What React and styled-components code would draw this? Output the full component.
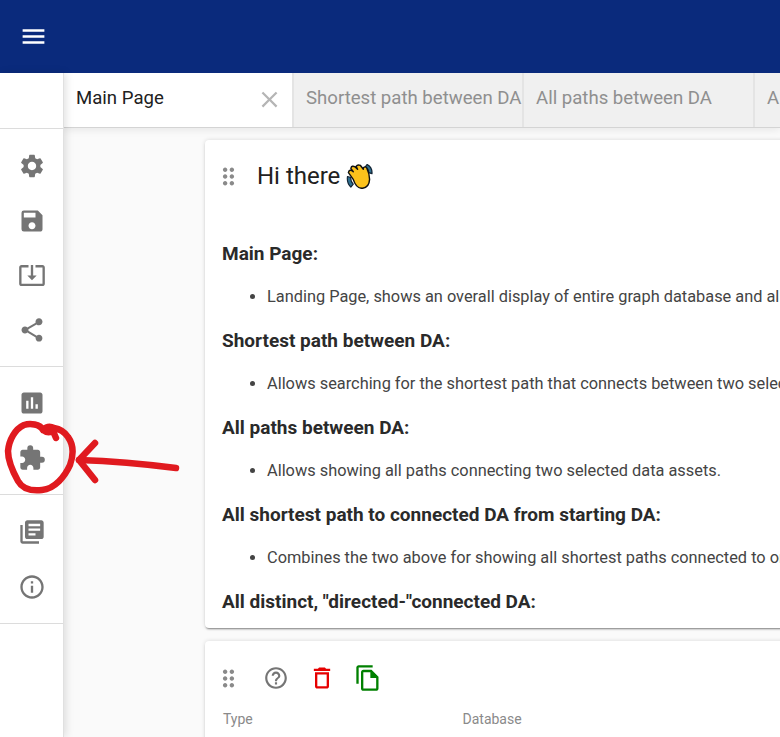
import React from "react";
import styled, { createGlobalStyle } from "styled-components";
import {
  MdMenu,
  MdClose,
  MdSettings,
  MdSave,
  MdSystemUpdateAlt,
  MdShare,
  MdAssessment,
  MdExtension,
  MdLibraryBooks,
  MdInfoOutline,
  MdHelpOutline,
  MdDeleteOutline,
  MdOutlineFileCopy,
  MdDragIndicator,
} from "react-icons/md";

const GlobalStyle = createGlobalStyle`
  html, body {
    margin: 0;
    height: 100%;
    overflow: hidden;
    background: #fafafa;
    font-family: Roboto, "Liberation Sans", sans-serif;
  }
  * { box-sizing: border-box; }
`;

const sections = [
  ["Main Page:", "Landing Page, shows an overall display of entire graph database and all of its data assets."],
  ["Shortest path between DA:", "Allows searching for the shortest path that connects between two selected data assets."],
  ["All paths between DA:", "Allows showing all paths connecting two selected data assets."],
  ["All shortest path to connected DA from starting DA:", "Combines the two above for showing all shortest paths connected to one data asset."],
];

const sidebarGroups = [
  { top: 10, icons: [MdSettings, MdSave, MdSystemUpdateAlt, MdShare] },
  { top: 9, icons: [MdAssessment, MdExtension] },
  { top: 10, icons: [MdLibraryBooks, MdInfoOutline] },
];

export default function App() {
  return (
    <Page>
      <GlobalStyle />
      <AppBar>
        <MdMenu size={29} />
      </AppBar>
      <Body>
        <Sidebar>
          <SidebarTop />
          {sidebarGroups.map((group, i) => (
            <SidebarGroup key={i} $top={group.top}>
              {group.icons.map((Icon, j) => (
                <SideIcon key={j}>
                  <Icon size={28} />
                </SideIcon>
              ))}
            </SidebarGroup>
          ))}
        </Sidebar>
        <Main>
          <TabBar>
            <Tab $active $width={230}>
              Main Page
              <CloseIcon size={27} />
            </Tab>
            <Tab $width={230}>Shortest path between DA</Tab>
            <Tab $width={231}>All paths between DA</Tab>
            <Tab $width={230}>All shortest path to connected DA</Tab>
          </TabBar>
          <Cards>
            <Card $height={488}>
              <CardHeader>
                <Grip size={27} />
                <Title>
                  Hi there <WaveHand />
                </Title>
              </CardHeader>
              <Content>
                {sections.map(([title, text]) => (
                  <React.Fragment key={title}>
                    <Heading>{title}</Heading>
                    <Bullets>
                      <li>{text}</li>
                    </Bullets>
                  </React.Fragment>
                ))}
                <Heading>All distinct, "directed-"connected DA:</Heading>
              </Content>
            </Card>
            <Card $height={300}>
              <Toolbar>
                <Grip size={27} />
                <ToolIcons>
                  <MdHelpOutline size={26} color="#757575" />
                  <MdDeleteOutline size={28} color="#e60000" />
                  <MdOutlineFileCopy size={28} color="#008000" />
                </ToolIcons>
              </Toolbar>
              <Fields>
                <FieldLabel>Type</FieldLabel>
                <FieldLabel>Database</FieldLabel>
              </Fields>
            </Card>
          </Cards>
        </Main>
      </Body>
      <Annotation viewBox="0 420 200 120" aria-hidden="true">
        <path d="M43 430 C40 424 30 423 24 425 C15 429 9 440 8 451 C8 462 13 472 18 481 C23 490 33 491 42 490 C55 489 65 476 70 465 C74 454 73 444 68 437 C64 431 60 429 54 428 C50 426 47 426 43 430 Q48 434 53 431 L56 438" />
        <path d="M79 460 C110 461 145 464 176 468" />
        <path d="M95 443 L79 460 L95 480" />
      </Annotation>
    </Page>
  );
}

function WaveHand() {
  return (
    <Wave viewBox="0 0 28 26" aria-hidden="true">
      <path d="M1.5 13 Q0.5 20 5 24 L7.5 21 Q4.5 18 5 14 Z M22 0.5 Q27.5 3.5 27 10 L23.5 9 Q23.5 5 20 3 Z" fill="#2f6f8f" stroke="#123" strokeWidth="1.2" strokeLinejoin="round" />
      <path d="M7.5 16 L2.5 9 Q3 5.5 6.5 7 L7.5 8 L5 4.5 Q6 1 9.5 3 L12 5.5 L10.5 2.5 Q12 0 15 1.5 L18 5.5 L18 4 Q20 2 21.5 4 Q24.5 10 24.5 16 Q24 24.5 17 25.3 Q10.5 25.5 7.5 16 Z" fill="#fcc21b" stroke="#111" strokeWidth="1.5" strokeLinejoin="round" />
    </Wave>
  );
}

const Page = styled.div`
  position: relative;
  width: 780px;
  height: 737px;
  overflow: hidden;
  background: #fafafa;
`;

const AppBar = styled.header`
  height: 73px;
  background: #0a2a7c;
  color: #fff;
  display: flex;
  align-items: center;
  padding-left: 19px;
`;

const Body = styled.div`
  display: flex;
  height: 664px;
`;

const Sidebar = styled.nav`
  width: 64px;
  flex-shrink: 0;
  background: #fff;
  border-right: 1px solid #e0e0e0;
  box-shadow: 2px 0 8px rgba(0, 0, 0, 0.12);
  z-index: 2;
  height: 100%;
`;

const SidebarTop = styled.div`
  height: 56px;
  border-bottom: 1px solid #dcdcdc;
`;

const SidebarGroup = styled.div`
  display: flex;
  flex-direction: column;
  padding: ${(p) => p.$top}px 0 9px;
  border-bottom: 1px solid #dcdcdc;
`;

const SideIcon = styled.div`
  height: 54.5px;
  display: flex;
  align-items: center;
  justify-content: center;
  color: #757575;
`;

const Main = styled.main`
  flex: 1;
  min-width: 0;
  overflow: hidden;
`;

const TabBar = styled.div`
  position: relative;
  display: flex;
  height: 55px;
  background: #f0f0f0;
  border-bottom: 1px solid #d4d4d4;
  box-shadow: 0 2px 8px rgba(0, 0, 0, 0.08);
`;

const Tab = styled.div`
  width: ${(p) => p.$width}px;
  flex-shrink: 0;
  display: flex;
  align-items: center;
  justify-content: space-between;
  padding: 0 12px 5px;
  white-space: nowrap;
  overflow: hidden;
  font-size: 18.6px;
  color: ${(p) => (p.$active ? "#212121" : "#8f8f8f")};
  background: ${(p) => (p.$active ? "#fff" : "#f0f0f0")};
  border-right: 2px solid #e4e4e4;
`;

const CloseIcon = styled(MdClose)`
  color: #b5b5b5;
  margin: 3px -3px 0 0;
  flex-shrink: 0;
`;

const Cards = styled.div`
  display: flex;
  flex-direction: column;
  gap: 13px;
  padding: 12px 0 0 141px;
  width: 900px;
`;

const Card = styled.section`
  background: #fff;
  border-radius: 4px;
  box-shadow: 0 2px 2px -1px rgba(0, 0, 0, 0.45), 0 0 4px rgba(0, 0, 0, 0.14);
  height: ${(p) => p.$height}px;
  overflow: hidden;
  flex-shrink: 0;
`;

const CardHeader = styled.div`
  display: flex;
  align-items: center;
  gap: 15px;
  height: 72px;
  padding-left: 10px;
`;

const Grip = styled(MdDragIndicator)`
  color: #8a8a8a;
  flex-shrink: 0;
`;

const Title = styled.h2`
  margin: 0;
  font-size: 24px;
  font-weight: 400;
  color: #212121;
  display: flex;
  align-items: center;
  gap: 6px;
`;

const Wave = styled.svg`
  width: 27px;
  height: 25px;
`;

const Content = styled.div`
  padding: 28px 0 0 17px;
  white-space: nowrap;
`;

const Heading = styled.div`
  font-size: 19px;
  line-height: 27px;
  font-weight: 700;
  color: #2a2a2a;
`;

const Bullets = styled.ul`
  margin: 19px 0 17px;
  padding-left: 45px;
  height: 24px;
  line-height: 22px;
  font-size: 16.35px;
  color: #444;
`;

const Toolbar = styled.div`
  display: flex;
  align-items: center;
  height: 70px;
  padding: 4px 0 0 10px;
`;

const ToolIcons = styled.div`
  display: flex;
  align-items: center;
  gap: 18.5px;
  margin-left: 21px;
`;

const Fields = styled.div`
  display: grid;
  grid-template-columns: 239.5px 240px;
  padding-left: 18px;
`;

const FieldLabel = styled.span`
  font-size: 14px;
  line-height: 16px;
  color: #8a8a8a;
`;

const Annotation = styled.svg`
  position: absolute;
  left: 0;
  top: 420px;
  width: 200px;
  height: 120px;
  z-index: 5;
  pointer-events: none;
  path {
    fill: none;
    stroke: #e01a1f;
    stroke-width: 6.5;
    stroke-linecap: round;
    stroke-linejoin: round;
  }
`;
